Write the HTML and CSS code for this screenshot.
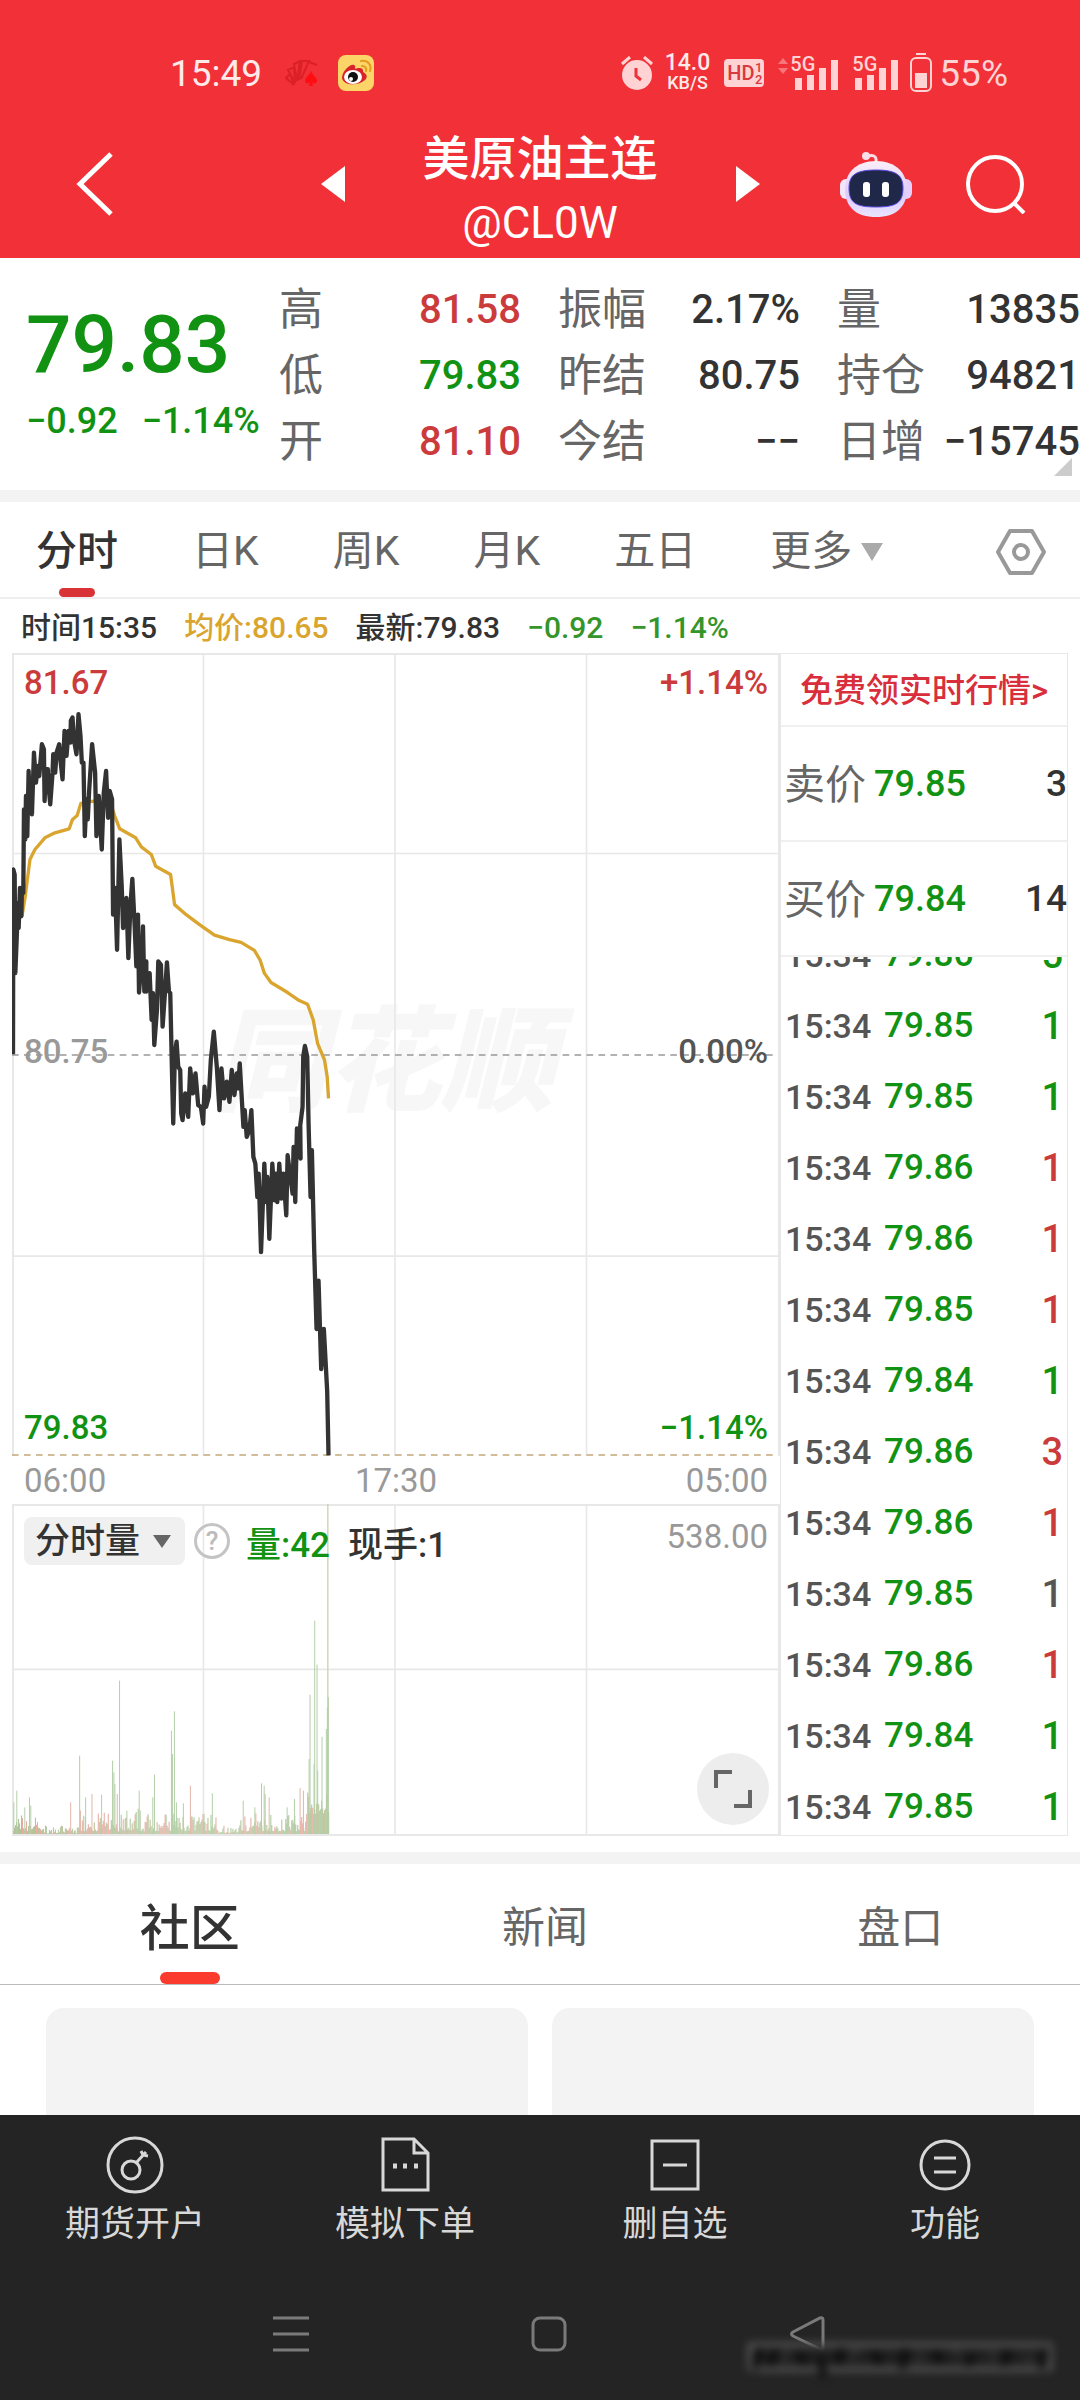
FILE: index.html
```
<!DOCTYPE html>
<html lang="zh-CN">
<head>
  <meta charset="UTF-8">
  <meta name="viewport" content="width=device-width, initial-scale=1.0">
  <title>美原油主连 @CL0W</title>
  <link rel="stylesheet" href="styles.css">
</head>
<body>
  <header>
    <div class="status">
      <span class="clock">15:49</span>
      <svg class="st-huawei" width="34" height="28" viewBox="0 0 34 28" fill="none" stroke="#db2027" stroke-width="2">
        <path d="M9 26 L1 19 L5 15 Z M10 24 L3 11 L9 8 Z M12 22 L9 5 L15 2 Z M14 21 L17 2 L24 2 L16 20 M24 3 L32 6"/>
        <path d="M26 12 C28 17 32 18 32 22 C32 25 28 25 27 23 L28 27 H24 L25 23 C24 25 20 25 20 22 C20 18 24 17 26 12 Z" fill="#ff0d12" stroke="none"/>
      </svg>
      <svg class="st-weibo" width="36" height="36" viewBox="0 0 36 36">
        <rect width="36" height="36" rx="8" fill="#fbd568"/>
        <path d="M4 23 C4 16 13 8 16 10 C18 11 17 13 17 14 C21 12 26 13 25 17 C29 19 30 22 27 25 C21 31 5 31 4 23 Z" fill="#d8232a"/>
        <ellipse cx="15" cy="22" rx="9" ry="7" fill="#fff"/>
        <circle cx="15" cy="22" r="5" fill="#111"/>
        <circle cx="13" cy="24" r="2" fill="#fff"/>
        <path d="M24 11 C27 11 29 13 28 16 M23 6 C30 5 34 10 32 16" fill="none" stroke="#e79a1c" stroke-width="2" stroke-linecap="round"/>
      </svg>
      <div class="status-right">
        <svg width="32" height="34" viewBox="0 0 32 34" fill="#ffd3d4">
          <circle cx="16" cy="19" r="15"/>
          <path d="M1 8 L9 1 M31 8 L23 1" stroke="#ffd3d4" stroke-width="3"/>
          <path d="M15 12 V20 L20 24" fill="none" stroke="#f13037" stroke-width="3"/>
        </svg>
        <span class="speed"><b>14.0</b><i>KB/S</i></span>
        <span class="hd">HD<sup>1</sup><sub>2</sub></span>
        <div class="signal signal-data">
          <svg width="60" height="34" viewBox="0 0 60 34" fill="#ffd3d4">
            <path d="M0 8 L5 2 L10 8 Z M0 12 L5 18 L10 12 Z" fill="#f8777b"/>
            <path d="M17 22 h7 v12 h-7 Z M29 19 h7 v15 h-7 Z M41 12 h7 v22 h-7 Z M53 4 h7 v30 h-7 Z"/>
          </svg>
          <span>5G</span>
        </div>
        <div class="signal">
          <svg width="46" height="34" viewBox="14 0 46 34" fill="#ffd3d4">
            <path d="M17 22 h7 v12 h-7 Z M29 19 h7 v15 h-7 Z M41 12 h7 v22 h-7 Z M53 4 h7 v30 h-7 Z"/>
          </svg>
          <span>5G</span>
        </div>
        <svg class="battery" width="22" height="40" viewBox="0 0 22 40" fill="#ffd3d4">
          <path d="M6 1 h10" stroke="#ffd3d4" stroke-width="2"/>
          <rect x="1" y="5" width="20" height="33" rx="5" fill="none" stroke="#ffd3d4" stroke-width="2"/>
          <rect x="5" y="20" width="12" height="15"/>
        </svg>
        <span class="percent">55%</span>
      </div>
    </div>

    <nav class="titlebar">
      <button class="back" aria-label="返回">
        <svg width="38" height="64" viewBox="0 0 38 64" fill="none" stroke="#fff" stroke-width="5"><path d="M35 2 L4 32 L35 62"/></svg>
      </button>
      <div class="switcher">
        <button aria-label="上一个"><svg width="24" height="36" viewBox="0 0 24 36" fill="#fff"><path d="M24 0 V36 L0 18 Z"/></svg></button>
        <div class="title">
          <h1>美原油主连</h1>
          <p>@CL0W</p>
        </div>
        <button aria-label="下一个"><svg width="24" height="36" viewBox="0 0 24 36" fill="#fff"><path d="M0 0 V36 L24 18 Z"/></svg></button>
      </div>
      <div class="actions">
        <button aria-label="智能助手">
          <svg width="72" height="66" viewBox="0 0 72 66">
            <defs>
              <linearGradient id="shell" x1="0" y1="0" x2="0" y2="1">
                <stop offset="0" stop-color="#fbeff8"/><stop offset="0.6" stop-color="#dccbfb"/><stop offset="1" stop-color="#e9e4ff"/>
              </linearGradient>
            </defs>
            <path d="M36 11 C37 4 32 4 28 5" fill="none" stroke="#f9dfe8" stroke-width="3"/>
            <circle cx="26" cy="5" r="4" fill="#f9dfe8"/>
            <rect x="0" y="28" width="12" height="20" rx="6" fill="#f3e6fa"/>
            <rect x="60" y="28" width="12" height="20" rx="6" fill="#e6d0fb"/>
            <path d="M36 10 C56 10 67 22 67 38 C67 56 56 66 36 66 C16 66 5 56 5 38 C5 22 16 10 36 10 Z" fill="url(#shell)"/>
            <path d="M36 19 C56 19 63 24 63 37 C63 52 56 56 36 56 C16 56 9 52 9 37 C9 24 16 19 36 19 Z" fill="#1f2848" stroke="#5b4be0" stroke-width="1"/>
            <rect x="23" y="31" width="7" height="15" rx="3" fill="#fff"/>
            <rect x="42" y="31" width="7" height="15" rx="3" fill="#fff"/>
          </svg>
        </button>
        <button aria-label="搜索">
          <svg width="60" height="60" viewBox="0 0 60 60" fill="none" stroke="#fff" stroke-width="4"><circle cx="29" cy="30" r="27"/><path d="M48 49 L58 59"/></svg>
        </button>
      </div>
    </nav>
  </header>

  <section class="quote">
    <div class="last down">
      <strong>79.83</strong>
      <p><span>−0.92</span><span>−1.14%</span></p>
    </div>
    <dl class="stats">
      <div><dt>高</dt><dd class="up">81.58</dd></div>
      <div><dt>振幅</dt><dd>2.17%</dd></div>
      <div><dt>量</dt><dd>13835</dd></div>
      <div><dt>低</dt><dd class="down">79.83</dd></div>
      <div><dt>昨结</dt><dd>80.75</dd></div>
      <div><dt>持仓</dt><dd>94821</dd></div>
      <div><dt>开</dt><dd class="up">81.10</dd></div>
      <div><dt>今结</dt><dd>−−</dd></div>
      <div><dt>日增</dt><dd>−15745</dd></div>
    </dl>
    <svg class="corner" width="18" height="18" viewBox="0 0 18 18"><path d="M18 0 V18 H0 Z" fill="#ccc"/></svg>
  </section>

  <nav class="periods">
    <button class="active">分时</button>
    <button>日K</button>
    <button>周K</button>
    <button>月K</button>
    <button>五日</button>
    <button class="more">更多<svg width="24" height="20" viewBox="0 0 24 20"><path d="M1 1 H23 L12 19 Z" fill="#aaa"/></svg></button>
    <button class="gear" aria-label="设置">
      <svg width="50" height="46" viewBox="0 0 50 46" fill="none" stroke="#999" stroke-width="4" stroke-linejoin="round"><path d="M14 2 H36 L48 23 L36 44 H14 L2 23 Z"/><circle cx="25" cy="23" r="7"/></svg>
    </button>
  </nav>

  <p class="info">
    <span>时间15:35</span>
    <span class="avg">均价:80.65</span>
    <span>最新:79.83</span>
    <span class="down">−0.92</span>
    <span class="down">−1.14%</span>
  </p>

  <main class="board">
    <div class="charts">
      <div class="price-chart">
        <span class="watermark">同花顺</span>
        <svg class="plot" viewBox="36 42 2304 2403" preserveAspectRatio="none" fill="none">
          <path class="grid" d="M612 42 V2445 M1188 42 V2445 M1764 42 V2445 M36 642 H2340 M36 1847 H2340"/>
          <path d="M36 1245 H2340" stroke="#999" stroke-width="5" stroke-dasharray="20 16"/>
          <path d="M36 2442 H2340" stroke="#c2a878" stroke-width="5" stroke-dasharray="20 16"/>
          <polyline id="avgLine" stroke="#d9a52e" stroke-width="10" stroke-linejoin="round"/>
          <polyline id="priceLine" stroke="#333" stroke-width="13" stroke-linejoin="round"/>
        </svg>
        <div class="labels"><span class="up">81.67</span><span class="up">+1.14%</span></div>
        <div class="labels mid"><span>80.75</span><span class="zero">0.00%</span></div>
        <div class="labels"><span class="down">79.83</span><span class="down">−1.14%</span></div>
      </div>
      <div class="times"><span>06:00</span><span>17:30</span><span>05:00</span></div>
      <div class="volume-chart">
        <svg class="plot" viewBox="36 75 2304 990" preserveAspectRatio="none">
          <path class="grid" d="M612 75 V1065 M1188 75 V1065 M1764 75 V1065 M36 571 H2340"/>
          <path d="M986 75 V1065" stroke="#c9d3ae" stroke-width="4"/>
          <g id="volumeBars"></g>
        </svg>
        <div class="volume-head">
          <label class="picker">
            <select aria-label="指标"><option>分时量</option></select>
            <svg width="18" height="13" viewBox="0 0 18 13"><path d="M0 0 H18 L9 13 Z" fill="#666"/></svg>
          </label>
          <button class="help" aria-label="说明">?</button>
          <span class="down">量:42</span>
          <span class="current">现手:1</span>
          <span class="max">538.00</span>
        </div>
        <button class="expand" aria-label="全屏">
          <svg width="38" height="38" viewBox="0 0 38 38" fill="none" stroke="#666" stroke-width="4"><path d="M2 18 V2 H18 M36 20 V36 H20"/></svg>
        </button>
      </div>
    </div>

    <aside class="book">
      <a class="promo" href="#">免费领实时行情&gt;</a>
      <div class="offer"><span>卖价</span><b>79.85</b><em>3</em></div>
      <div class="offer"><span>买价</span><b>79.84</b><em>14</em></div>
      <div class="ticks">
        <table>
          <tbody id="ticks"></tbody>
        </table>
      </div>
    </aside>
  </main>

  <nav class="sections">
    <button class="active">社区</button>
    <button>新闻</button>
    <button>盘口</button>
  </nav>
  <div class="cards">
    <div></div>
    <div></div>
  </div>

  <footer>
    <div class="toolbar">
      <button>
        <svg width="60" height="60" viewBox="0 0 60 60"><circle cx="30" cy="30" r="27"/><circle cx="26" cy="35" r="9"/><path d="M31 28 L41 17 M36 16 L38 20 L43 21"/></svg>
        期货开户
      </button>
      <button>
        <svg width="60" height="60" viewBox="0 0 60 60"><path d="M8 4 H39 L53 18 V55 H8 Z M39 4 V18 H53"/><path d="M18 31 h4 M28 31 h4 M39 31 h4" stroke-width="5"/></svg>
        模拟下单
      </button>
      <button>
        <svg width="60" height="60" viewBox="0 0 60 60"><path d="M7 6 H53 V54 H7 Z M18 30 H42"/></svg>
        删自选
      </button>
      <button>
        <svg width="60" height="60" viewBox="0 0 60 60"><circle cx="30" cy="30" r="24"/><path d="M19 23 H41 M19 37 H41"/></svg>
        功能
      </button>
    </div>
    <div class="system">
      <button aria-label="最近任务"><svg width="36" height="36" viewBox="0 0 36 36"><path d="M0 2 H36 M0 18 H36 M0 34 H36"/></svg></button>
      <button aria-label="主屏幕"><svg width="36" height="36" viewBox="0 0 36 36"><rect x="2" y="2" width="32" height="32" rx="7"/></svg></button>
      <button aria-label="返回"><svg width="36" height="36" viewBox="0 0 36 36"><path d="M34 4 V32 Q34 35 31 33 L4 20 Q1 18 4 16 L31 2 Q34 1 34 4 Z"/></svg></button>
      <svg class="smudge" width="310" height="44" viewBox="0 0 310 44">
        <rect x="4" y="10" width="300" height="24" fill="#1f1f1f"/>
        <path d="M14 12 L8 34 M30 14 L24 32 M52 18 L60 30 M74 22 L78 42 M96 12 L92 30 M128 16 L134 30 M160 12 L156 34 M188 16 L196 28 M226 20 L222 32 M262 14 L258 32 M300 12 L296 34" stroke="#0c0c0c" stroke-width="7"/>
        <path d="M42 16 L36 26 M112 14 L104 24 M176 20 L170 28 M208 14 L214 22 M244 16 L250 26 M280 20 L286 28" stroke="#303030" stroke-width="6"/>
      </svg>
    </div>
  </footer>

  <script>
    // Intraday price and average lines
    const price = "39,1243 40,690 44,705 46,1000 50,900 54,790 56,865 60,745 64,830 66,745 70,760 72,510 76,600 78,470 82,590 86,395 90,520 94,430 96,525 102,340 108,430 114,380 118,410 126,315 132,330 134,485 138,390 144,390 146,440 151,495 158,400 160,345 166,400 170,340 178,315 182,365 188,420 194,275 200,350 206,275 212,310 213,245 218,235 222,300 230,345 236,225 242,290 246,370 251,370 255,590 260,480 264,540 268,455 277,315 286,400 290,590 297,470 306,630 312,460 319,395 325,535 330,455 337,480 340,825 346,745 352,930 359,600 366,740 370,865 380,775 386,955 392,800 398,718 405,860 410,980 415,825 418,1058 426,960 430,860 434,1055 440,965 440,1055 450,1000 456,1140 460,1060 464,1215 472,1110 476,965 484,975 489,1160 496,1060 502,968 508,1055 512,1060 518,1330 521,1450 526,1240 531,1205 536,1280 542,1290 545,1420 549,1440 557,1360 566,1430 572,1285 580,1360 588,1300 596,1395 604,1400 611,1450 615,1340 620,1400 628,1370 634,1260 643,1175 652,1280 660,1410 666,1285 674,1375 682,1325 690,1385 697,1290 705,1365 712,1300 716,1345 721,1270 728,1390 732,1460 736,1410 742,1490 750,1470 756,1410 762,1550 768,1570 774,1670 778,1600 785,1835 795,1570 800,1685 804,1610 810,1795 819,1570 826,1680 829,1600 834,1685 840,1570 846,1675 852,1600 861,1725 865,1545 872,1600 880,1660 883,1520 888,1685 893,1465 899,1500 904,1555 903,1455 910,1400 912,1250 917,1218 924,1250 928,1450 934,1670 938,1530 945,1830 952,2065 958,1920 966,2185 974,2065 984,2250 988,2443";
    const average = "66,830 75,775 90,660 105,630 135,595 165,580 208,568 218,540 232,528 243,492 280,485 335,500 345,530 360,568 408,595 425,622 455,645 468,680 513,705 525,795 560,825 600,855 645,886 690,900 725,908 765,932 782,960 795,1000 815,1028 865,1058 900,1082 925,1093 942,1140 955,1210 976,1260 984,1310 988,1375";
    document.getElementById("priceLine").setAttribute("points", price);
    document.getElementById("avgLine").setAttribute("points", average);

    // Volume bars: [x, height], the rest of the minutes are low noise
    const peaks = [[40, 95], [49, 130], [73, 80], [87, 110], [91, 85], [211, 95], [238, 235], [250, 55], [256, 110], [275, 120], [304, 118], [337, 220], [341, 185], [344, 150], [351, 120], [358, 460], [380, 70], [417, 130], [458, 110], [463, 178], [514, 310], [517, 240], [523, 368], [529, 95], [550, 92], [571, 145], [612, 60], [637, 122], [730, 100], [765, 80], [785, 152], [793, 145], [796, 120], [808, 110], [862, 80], [884, 105], [901, 138], [911, 130], [928, 225], [931, 418], [943, 210], [945, 640], [952, 508], [954, 190], [967, 292], [980, 315], [983, 380], [986, 410]];
    const bars = document.getElementById("volumeBars");
    let seed = 7;
    function random() {
      seed = (seed * 16807) % 2147483647;
      return seed / 2147483647;
    }
    function addBar(x, h, color) {
      const bar = document.createElementNS("http://www.w3.org/2000/svg", "rect");
      bar.setAttribute("x", x);
      bar.setAttribute("y", 1065 - h);
      bar.setAttribute("width", 3);
      bar.setAttribute("height", h);
      bar.setAttribute("fill", color);
      bars.appendChild(bar);
    }
    for (let x = 39; x < 988; x += 3) {
      const quiet = (x > 130 && x < 230) || (x > 650 && x < 720);
      const base = x > 920 ? 60 : quiet ? 2 : 8;
      const h = base + random() * random() * (quiet ? 30 : 75);
      addBar(x, h, ["#a9c79a", "#b5bf92", "#e6aaa0"][Math.floor(random() * 3)]);
    }
    const reds = [87, 211, 275, 351, 571, 808, 901, 911];
    peaks.forEach(([x, h]) => addBar(x, h, reds.includes(x) ? "#e3b5a8" : "#b3cfa8"));

    // Trade ticks
    const ticks = [["79.86", 5, "down"], ["79.85", 1, "down"], ["79.85", 1, "down"], ["79.86", 1, "up"], ["79.86", 1, "up"], ["79.85", 1, "up"], ["79.84", 1, "down"], ["79.86", 3, "up"], ["79.86", 1, "up"], ["79.85", 1, "flat"], ["79.86", 1, "up"], ["79.84", 1, "down"], ["79.85", 1, "down"]];
    document.getElementById("ticks").innerHTML = ticks
      .map(([p, n, dir]) => `<tr><td>15:34</td><td class="down">${p}</td><td class="${dir}">${n}</td></tr>`)
      .join("");
  </script>
</body>
</html>
```
FILE: styles.css
```
* {
  box-sizing: border-box;
}

body {
  margin: 0;
  font-family: Roboto, "Noto Sans CJK SC", sans-serif;
  background: #fff;
  color: #333;
}

h1, p, dl, dd {
  margin: 0;
}

button {
  padding: 0;
  border: none;
  background: none;
  font: inherit;
  color: inherit;
  cursor: pointer;
}

svg {
  display: block;
}

.up {
  color: #cb3b3c;
}

.down {
  color: #129212;
}

.flat {
  color: #555;
}

/* Header */
header {
  height: 258px;
  padding-top: 36px;
  background: #f13037;
  color: #fff;
}

.status {
  display: flex;
  align-items: center;
  height: 74px;
  padding: 0 72px 0 170px;
}

.clock {
  font-size: 37px;
  color: #ffeaea;
}

.st-huawei {
  margin-left: 23px;
}

.st-weibo {
  margin-left: 19px;
}

.status-right {
  display: flex;
  align-items: center;
  margin-left: auto;
  color: #ffd3d4;
}

.speed {
  display: flex;
  flex-direction: column;
  align-items: center;
  margin-left: 12px;
  color: #ffeaea;
}

.speed b {
  font-size: 23px;
  font-weight: 500;
  line-height: 20px;
}

.speed i {
  font-size: 18px;
  font-weight: 500;
  font-style: normal;
  line-height: 20px;
}

.hd {
  position: relative;
  width: 40px;
  height: 28px;
  margin: 0 14px;
  padding-left: 3px;
  border-radius: 4px;
  background: #ffd3d4;
  color: #d9383e;
  font-size: 20px;
  font-weight: 500;
  line-height: 28px;
}

.hd sup,
.hd sub {
  position: absolute;
  right: 2px;
  font-size: 13px;
  line-height: 13px;
}

.hd sup {
  top: 2px;
}

.hd sub {
  bottom: 1px;
}

.signal {
  position: relative;
  margin-right: 12px;
}

.signal span {
  position: absolute;
  left: 0;
  top: -2px;
  font-size: 20px;
  font-weight: 500;
  line-height: 20px;
}

.signal-data {
  margin-right: 14px;
}

.signal-data span {
  left: 12px;
}

.battery {
  margin-right: 7px;
}

.percent {
  font-size: 37px;
}

.titlebar {
  display: grid;
  grid-template-columns: 1fr auto 1fr;
  align-items: center;
  height: 148px;
  padding: 0 54px 0 76px;
}

.back {
  justify-self: start;
}

.switcher {
  display: flex;
  align-items: center;
  gap: 78px;
  margin-left: -22px;
}

.title {
  padding-top: 13px;
  text-align: center;
}

.title h1 {
  font-size: 47px;
  font-weight: 500;
  line-height: 64px;
}

.title p {
  font-size: 44px;
  line-height: 64px;
}

.actions {
  display: flex;
  align-items: center;
  justify-content: flex-end;
  gap: 54px;
}

/* Quote summary */
.quote {
  position: relative;
  display: flex;
  height: 244px;
  padding: 18px 0 0 26px;
  border-bottom: 12px solid #f3f3f3;
  overflow: hidden;
}

.last {
  width: 253px;
  padding-top: 24px;
  font-weight: 500;
}

.last strong {
  display: block;
  font-size: 80px;
  font-weight: 500;
  line-height: 90px;
}

.last p {
  display: flex;
  gap: 24px;
  font-size: 36px;
  line-height: 62px;
}

.stats {
  flex: 1;
  display: grid;
  grid-template-columns: 242px 242px 1fr;
  grid-auto-rows: 66px;
  column-gap: 37px;
}

.stats div {
  display: flex;
  align-items: center;
  justify-content: space-between;
}

.stats dt {
  padding-bottom: 6px;
  font-size: 44px;
  color: #666;
  white-space: nowrap;
}

.stats dd {
  font-size: 40px;
  font-weight: 500;
}

.corner {
  position: absolute;
  right: 8px;
  bottom: 14px;
}

/* Period tabs */
.periods {
  display: flex;
  align-items: center;
  gap: 74px;
  height: 97px;
  padding: 0 34px 0 36px;
  border-bottom: 2px solid #eee;
  font-size: 41px;
  color: #666;
}

.periods button {
  position: relative;
  padding-top: 4px;
  line-height: 91px;
}

.periods .active {
  color: #333;
  font-weight: 500;
}

.periods .active::after {
  content: "";
  position: absolute;
  left: 50%;
  bottom: 0;
  width: 36px;
  height: 9px;
  margin-left: -18px;
  border-radius: 5px;
  background: #d93237;
}

.periods .more {
  display: flex;
  align-items: center;
  gap: 8px;
}

.periods .gear {
  margin-left: auto;
}

.info {
  display: flex;
  gap: 27px;
  padding: 4px 0 0 21px;
  font-size: 31px;
  font-weight: 500;
  line-height: 50px;
}

.info span {
  font-size: 30px;
}

.info .avg {
  color: #d9a52e;
}

.info .down {
  color: #36952a;
}

/* Charts and order book */
.board {
  display: flex;
  height: 1199px;
  padding: 0 12px 16px;
}

.charts {
  flex: 1;
  display: flex;
  flex-direction: column;
}

.plot {
  position: absolute;
  left: -2px;
  top: -2px;
  width: calc(100% + 2px);
  height: calc(100% + 2px);
}

.grid {
  fill: none;
  stroke: #e8e8e8;
  stroke-width: 5;
}

.price-chart,
.volume-chart {
  position: relative;
  border: 2px solid #e8e8e8;
}

.price-chart {
  display: flex;
  flex-direction: column;
  justify-content: space-between;
  height: 803px;
  border-bottom: none;
}

.watermark {
  position: absolute;
  left: 26%;
  top: 348px;
  font-size: 114px;
  font-weight: 900;
  font-style: italic;
  line-height: 120px;
  color: #f7f7f7;
}

.labels {
  position: relative;
  display: flex;
  justify-content: space-between;
  padding: 0 10px;
  font-size: 33px;
  font-weight: 500;
  line-height: 56px;
}

.labels.mid {
  padding-bottom: 8px;
  color: #999;
}

.labels .zero {
  color: #555;
}

.times {
  display: flex;
  justify-content: space-between;
  padding: 0 12px;
  font-size: 33px;
  line-height: 50px;
  height: 48px;
  color: #999;
}

.volume-chart {
  flex: 1;
}

.volume-head {
  position: relative;
  display: flex;
  align-items: center;
  height: 70px;
  padding: 0 10px;
  font-size: 35px;
  font-weight: 500;
}

.picker {
  position: relative;
}

.picker select {
  width: 161px;
  height: 48px;
  padding: 0 0 0 11px;
  border: none;
  border-radius: 8px;
  background: #f0f0f0;
  color: #333;
  font: inherit;
  appearance: none;
}

.picker svg {
  position: absolute;
  right: 14px;
  top: 18px;
}

.help {
  width: 36px;
  height: 36px;
  margin: 0 16px 0 9px;
  border: 3px solid #c4c4c4;
  border-radius: 50%;
  color: #bbb;
  font-size: 26px;
  line-height: 30px;
}

.volume-head .current {
  margin-left: 18px;
}

.volume-head .max {
  margin-left: auto;
  padding-bottom: 10px;
  color: #999;
  font-size: 33px;
  font-weight: 400;
}

.expand {
  position: absolute;
  right: 9px;
  bottom: 9px;
  display: flex;
  align-items: center;
  justify-content: center;
  width: 72px;
  height: 72px;
  border-radius: 50%;
  background: #ededed;
}

.book {
  display: flex;
  flex-direction: column;
  width: 288px;
  border: 1px solid #e8e8e8;
}

.promo {
  height: 73px;
  border-bottom: 2px solid #f0f0f0;
  color: #d92f3c;
  font-size: 33px;
  font-weight: 500;
  line-height: 74px;
  text-align: center;
  text-decoration: none;
}

.offer {
  display: flex;
  align-items: center;
  height: 115px;
  padding-left: 3px;
  border-bottom: 2px solid #f0f0f0;
}

.offer span {
  padding-bottom: 6px;
  font-size: 41px;
  color: #666;
}

.offer b {
  margin-left: 8px;
  color: #129212;
  font-size: 36px;
  font-weight: 500;
}

.offer em {
  margin-left: auto;
  font-size: 37px;
  font-style: normal;
  font-weight: 500;
}

/* The list is scrolled to the newest trade */
.ticks {
  flex: 1;
  display: flex;
  flex-direction: column;
  justify-content: flex-end;
  overflow: hidden;
}

.ticks table {
  width: 100%;
  border-collapse: collapse;
}

.ticks td {
  height: 71px;
  padding: 14px 0 0;
  font-size: 35px;
  font-weight: 500;
  line-height: 50px;
}

.ticks td:first-child {
  width: 103px;
  padding-left: 4px;
  color: #555;
  font-size: 34px;
}

.ticks td:last-child {
  padding-right: 4px;
  font-size: 38px;
  text-align: right;
}

/* Community tabs */
.sections {
  display: grid;
  grid-template-columns: repeat(3, 1fr);
  height: 133px;
  padding: 0 2px 0 12px;
  border-top: 12px solid #f3f3f3;
  border-bottom: 1px solid #bbb;
  font-size: 43px;
  color: #666;
}

.sections button {
  position: relative;
}

.sections .active {
  color: #333;
  font-size: 50px;
  font-weight: 500;
}

.sections .active::after {
  content: "";
  position: absolute;
  left: 50%;
  bottom: 0;
  width: 60px;
  height: 12px;
  margin-left: -30px;
  border-radius: 6px;
  background: #fb3b2d;
}

.cards {
  display: flex;
  gap: 24px;
  height: 130px;
  padding: 23px 46px 0;
}

.cards div {
  flex: 1;
  border-radius: 18px 18px 0 0;
  background: #f3f3f3;
}

/* Bottom bars */
footer {
  height: 285px;
  background: #242424;
}

.toolbar {
  display: grid;
  grid-template-columns: repeat(4, 1fr);
  padding-top: 20px;
  color: #d8d8d8;
  font-size: 35px;
  line-height: 60px;
}

.toolbar svg {
  margin: 0 auto;
  fill: none;
  stroke: #d8d8d8;
  stroke-width: 3;
}

.system {
  position: relative;
  display: flex;
  justify-content: center;
  gap: 222px;
  padding: 61px 0 0 18px;
}

.system svg {
  fill: none;
  stroke: #7a7a7a;
  stroke-width: 3;
}

.smudge {
  position: absolute;
  right: 24px;
  top: 80px;
  filter: blur(4px);
}
```
